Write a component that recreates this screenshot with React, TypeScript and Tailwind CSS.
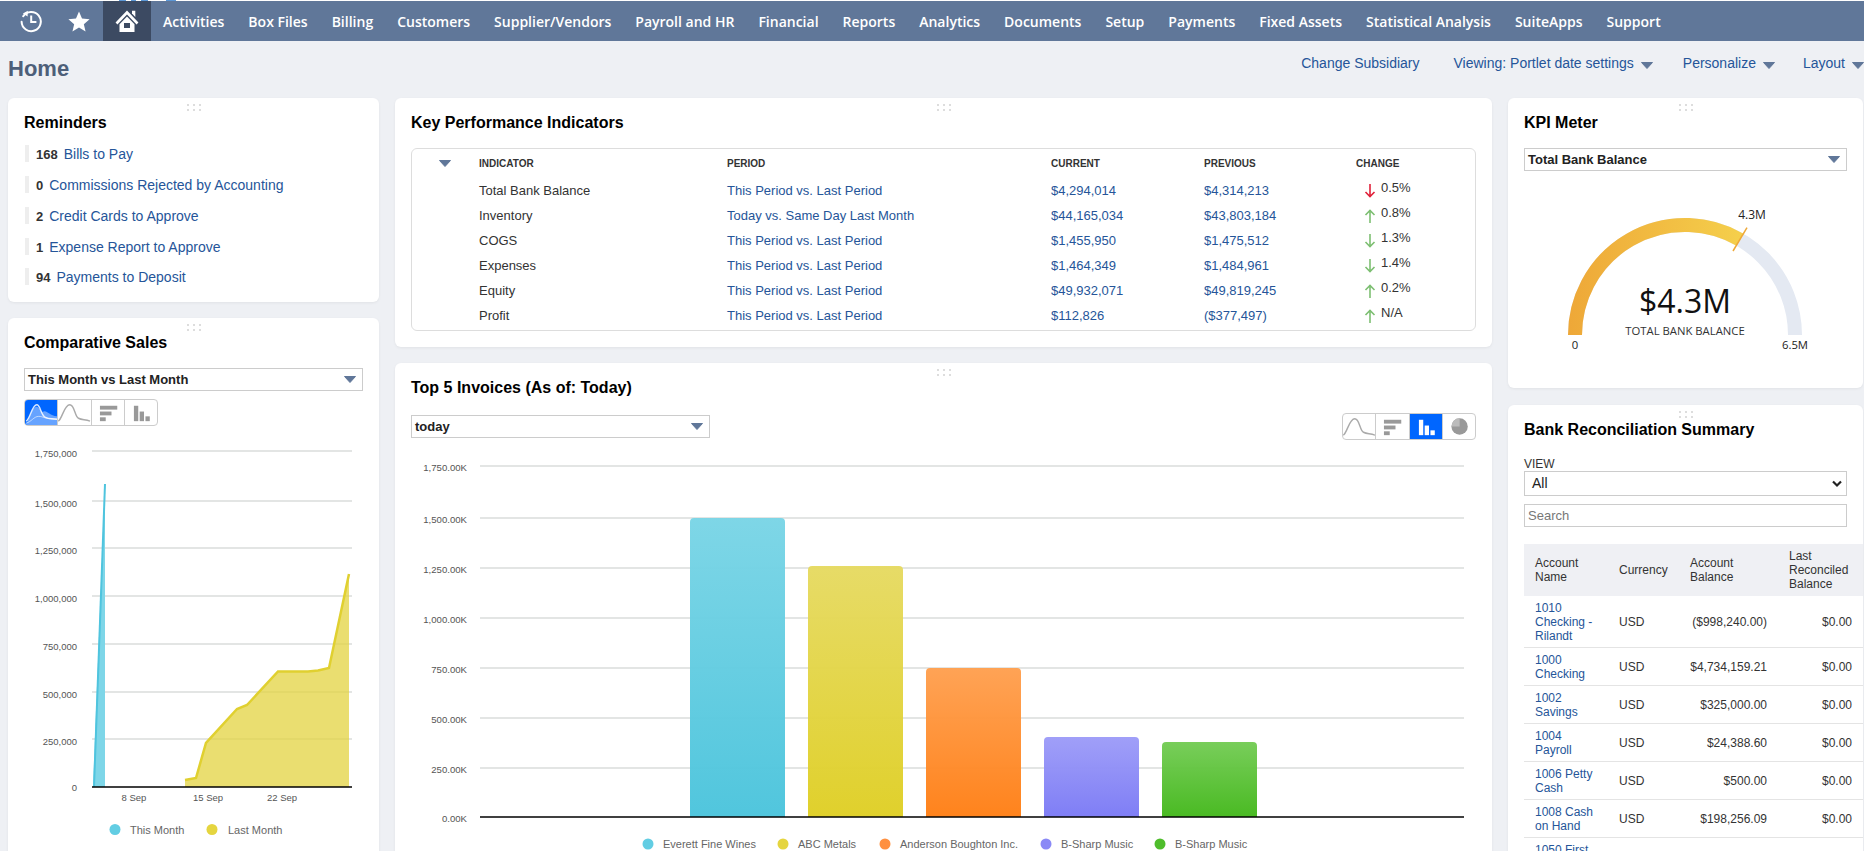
import React from "react";

const NAV = ["Activities","Box Files","Billing","Customers","Supplier/Vendors","Payroll and HR","Financial","Reports","Analytics","Documents","Setup","Payments","Fixed Assets","Statistical Analysis","SuiteApps","Support"];

function Tri({ className = "" }: { className?: string }) {
  return (
    <svg width="12" height="7" viewBox="0 0 12 7" className={className}>
      <path d="M0.5 0.5H11.5L6 6.5Z" fill="#607799" stroke="#607799" strokeLinejoin="round" />
    </svg>
  );
}

function Dots() {
  return (
    <div className="absolute top-[6px] left-1/2 -translate-x-1/2 grid grid-cols-3 gap-x-[4px] gap-y-[3px]">
      {[0,1,2,3,4,5].map((i) => <span key={i} className="block w-[2px] h-[2px] bg-[#dddddd]" />)}
    </div>
  );
}

function Card({ title, className = "", children }: { title: string; className?: string; children: React.ReactNode }) {
  return (
    <section className={`relative bg-white rounded-[6px] shadow-[0_1px_3px_rgba(0,0,0,0.06)] px-4 pt-[15px] overflow-hidden ${className}`}>
      <Dots />
      <h2 className="text-[16px] leading-[20px] font-bold text-black">{title}</h2>
      {children}
    </section>
  );
}

function Select({ label, className = "" }: { label: string; className?: string }) {
  return (
    <div className={`h-[23px] border border-[#cccccc] bg-white flex items-center justify-between pl-[3px] pr-[6px] text-[13px] font-bold text-[#222222] ${className}`}>
      <span>{label}</span>
      <Tri />
    </div>
  );
}

type Kind = "area" | "line" | "hbar" | "vbar" | "pie";

function ChartIcon({ kind, active }: { kind: Kind; active?: boolean }) {
  const c = active ? "#ffffff" : "#999999";
  return (
    <svg viewBox="0 0 33 26" className="block w-full h-full">
      {kind === "area" && (
        <>
          <path d="M1 24 C4 22 6 8 11 7 C15 6 16 14 19 12 C22 10 25 16 33 17 V26 H1Z" fill="#66a3ff" />
          <path d="M1 22 C5 20 7 5 12 5 C16 5 16 16 21 18 C25 20 28 19 33 20" fill="none" stroke="#ffffff" strokeOpacity="0.85" strokeWidth="1.5" />
          <path d="M1 24 C6 23 9 17 14 17 C19 17 20 20 33 20" fill="none" stroke="#ffffff" strokeOpacity="0.6" strokeWidth="1" />
        </>
      )}
      {kind === "line" && (
        <path d="M0 22 C4 20 6 5 12 5 C17 5 17 17 21 19 C25 21 28 20 33 22" fill="none" stroke="#aaaaaa" strokeWidth="1.5" />
      )}
      {kind === "hbar" && (
        <g fill={c}>
          <rect x="8" y="6" width="18" height="4" />
          <rect x="8" y="12" width="12" height="4" />
          <rect x="8" y="18" width="6" height="4" />
        </g>
      )}
      {kind === "vbar" && (
        <g fill={c}>
          <rect x="9" y="6" width="4.5" height="16" />
          <rect x="15" y="12" width="4.5" height="10" />
          <rect x="21" y="17" width="4.5" height="5" />
        </g>
      )}
      {kind === "pie" && (
        <>
          <circle cx="17" cy="13" r="8.5" fill="#999999" />
          <path d="M17 13V4.5A8.5 8.5 0 0 0 8.5 13Z" fill="#bbbbbb" />
        </>
      )}
    </svg>
  );
}

function ChartButtons({ kinds, active }: { kinds: Kind[]; active: Kind }) {
  return (
    <div className="flex w-[134px] h-[27px] border border-[#cccccc] rounded-[4px] overflow-hidden bg-white">
      {kinds.map((k, i) => (
        <div key={k} className={`flex-1 ${i > 0 ? "border-l border-[#cccccc]" : ""} ${k === active ? "bg-[#0066ff]" : ""}`}>
          <ChartIcon kind={k} active={k === active} />
        </div>
      ))}
    </div>
  );
}

function NavIcons() {
  return (
    <>
      <div className="w-[62px] flex items-center justify-center">
        <svg width="24" height="24" viewBox="0 0 24 24" fill="none" stroke="#fff" strokeWidth="2">
          <path d="M4.2 7.2 A9.6 9.6 0 1 1 2.6 12.8" strokeLinecap="round" />
          <path d="M8.8 1.8 L3.9 4.4 L8.6 7.4Z" fill="#fff" stroke="none" />
          <path d="M12.2 6.6 V13 H17.4" strokeWidth="2" />
        </svg>
      </div>
      <div className="w-[41px] -ml-[4px] mr-[4px] flex items-center justify-center">
        <svg width="22" height="21" viewBox="0 0 24 23"><path d="M12 0.5 L15.3 8.2 L23.6 8.9 L17.3 14.4 L19.2 22.5 L12 18.2 L4.8 22.5 L6.7 14.4 L0.4 8.9 L8.7 8.2Z" fill="#fff" /></svg>
      </div>
      <div className="w-[48px] bg-[#3c4a62] flex items-center justify-center">
        <svg width="24" height="23" viewBox="0 0 24 23">
          <path d="M1.5 13.5 L12 2.5 L22.5 13.5" fill="none" stroke="#fff" strokeWidth="2.6" />
          <path d="M17 0.8 H20.3 V7 L17 3.6Z" fill="#fff" />
          <path d="M4.5 14.2 L12 6.4 L19.5 14.2 V22 H4.5Z M9 13 V18 H15 V13Z" fill="#fff" fillRule="evenodd" />
        </svg>
      </div>
    </>
  );
}

function Reminder({ n, text, className = "mb-[14px]" }: { n: string; text: string; className?: string }) {
  return (
    <li className={`flex items-center h-[17px] leading-[17px] ${className}`}>
      <span className="w-[4px] h-[17px] bg-[#eeeeee] ml-[1px] mr-[7px]" />
      <span className="pt-px text-[13px] font-bold text-[#333333] mr-[6px]">{n}</span>
      <a className="pt-px text-[14px] text-[#255599]">{text}</a>
    </li>
  );
}

const KPI = [
  ["Total Bank Balance","This Period vs. Last Period","$4,294,014","$4,314,213","down-red","0.5%"],
  ["Inventory","Today vs. Same Day Last Month","$44,165,034","$43,803,184","up","0.8%"],
  ["COGS","This Period vs. Last Period","$1,455,950","$1,475,512","down","1.3%"],
  ["Expenses","This Period vs. Last Period","$1,464,349","$1,484,961","down","1.4%"],
  ["Equity","This Period vs. Last Period","$49,932,071","$49,819,245","up","0.2%"],
  ["Profit","This Period vs. Last Period","$112,826","($377,497)","up","N/A"],
];

function Arrow({ kind }: { kind: string }) {
  const color = kind === "down-red" ? "#e0213a" : "#7dbf72";
  const d = kind === "up" ? "M6 14 V1.5 M1.5 6 L6 1.5 L10.5 6" : "M6 0 V12.5 M1.5 8 L6 12.5 L10.5 8";
  return (
    <svg width="12" height="14" viewBox="0 0 12 14" className="ml-[8px] mr-[5px] shrink-0">
      <path d={d} fill="none" stroke={color} strokeWidth="1.6" />
    </svg>
  );
}

function KpiTable() {
  const cols = "grid grid-cols-[67px_248px_324px_153px_152px_1fr]";
  return (
    <div className="mt-[15px] h-[183px] border border-[#dddddd] rounded-[6px] text-[13px] text-[#333333]">
      <div className={`${cols} h-[29px] items-center text-[10px] font-bold text-[#333333]`}>
        <span className="flex justify-center pr-px"><Tri /></span>
        <span>INDICATOR</span><span>PERIOD</span><span>CURRENT</span><span>PREVIOUS</span><span>CHANGE</span>
      </div>
      {KPI.map((r) => (
        <div key={r[0]} className={`${cols} h-[25px] items-center`}>
          <span />
          <span>{r[0]}</span>
          <a className="text-[#255599]">{r[1]}</a>
          <a className="text-[#255599]">{r[2]}</a>
          <a className="text-[#255599]">{r[3]}</a>
          <span className="flex items-center">
            <Arrow kind={r[4]} />
            <span className="mb-[6px]">{r[5]}</span>
          </span>
        </div>
      ))}
    </div>
  );
}

const LEFT_Y = [[451,"1,750,000"],[501,"1,500,000"],[548,"1,250,000"],[596,"1,000,000"],[644,"750,000"],[692,"500,000"],[739,"250,000"]] as [number,string][];

function SalesChart() {
  const ff = { fontFamily: '"Liberation Sans", Arial, sans-serif' };
  return (
    <svg viewBox="24 430 339 421" width="339" height="421" className="block mt-[4px]" style={ff}>
      {LEFT_Y.map(([y, t]) => (
        <g key={t}>
          <line x1="92" x2="352" y1={y} y2={y} stroke="#dadddb" strokeWidth="1.5" />
          <text x="77" y={y + 6} textAnchor="end" fontSize="9.5" fill="#555555">{t}</text>
        </g>
      ))}
      <text x="77" y="791" textAnchor="end" fontSize="9.5" fill="#555555">0</text>
      <path d="M93 787 L105 484 V787Z" fill="#7ed6e8" />
      <path d="M94 787 L105 484" fill="none" stroke="#4fc4de" strokeWidth="2" />
      <path d="M185 787 V780 L196 778 L206 743 L237 709 L247 705 L278 671.5 L308 671.5 L318 670.5 L329 668 L349 574 V787Z" fill="#e3d340" fillOpacity="0.75" />
      <path d="M185 780 L196 778 L206 743 L237 709 L247 705 L278 671.5 L308 671.5 L318 670.5 L329 668 L349 574" fill="none" stroke="#e0d030" strokeWidth="2.5" />
      <line x1="92" x2="352" y1="787" y2="787" stroke="#000" strokeWidth="1.5" />
      {[[134,"8 Sep"],[208,"15 Sep"],[282,"22 Sep"]].map(([x, t]) => (
        <text key={t} x={x} y="801" textAnchor="middle" fontSize="9.5" fill="#555555">{t}</text>
      ))}
      <circle cx="115" cy="829.5" r="5.5" fill="#62cde3" />
      <text x="130" y="833.5" fontSize="11" fill="#666666">This Month</text>
      <circle cx="212" cy="829.5" r="5.5" fill="#e5d53f" />
      <text x="228" y="833.5" fontSize="11" fill="#666666">Last Month</text>
    </svg>
  );
}

const BAR_Y = [[465,"1,750.00K"],[517,"1,500.00K"],[567,"1,250.00K"],[617,"1,000.00K"],[667,"750.00K"],[717,"500.00K"],[767,"250.00K"]] as [number,string][];
const BARS = [
  { x: 690, top: 517, a: "#7ad5e6", b: "#4bc4dc", id: "b1" },
  { x: 808, top: 565, a: "#e6da62", b: "#dfcf25", id: "b2" },
  { x: 926, top: 667, a: "#ffa050", b: "#ff7f15", id: "b3" },
  { x: 1044, top: 736, a: "#9d9cf8", b: "#7b7af5", id: "b4" },
  { x: 1162, top: 741, a: "#74cc55", b: "#44b81c", id: "b5" },
];
const LEG = [[648,"Everett Fine Wines","#62cde3"],[783,"ABC Metals","#e5d53f"],[885,"Anderson Boughton Inc.","#ff9040"],[1046,"B-Sharp Music","#8a89f6"],[1160,"B-Sharp Music","#4fbd2c"]] as [number,string,string][];

function BarChart() {
  return (
    <svg viewBox="411 445 1064 406" width="1064" height="406" className="block mt-[6px]" style={{ fontFamily: '"Liberation Sans", Arial, sans-serif' }}>
      <defs>
        {BARS.map((b) => (
          <linearGradient key={b.id} id={b.id} x1="0" y1="0" x2="0" y2="1">
            <stop offset="0" stopColor={b.a} />
            <stop offset="1" stopColor={b.b} />
          </linearGradient>
        ))}
      </defs>
      {BAR_Y.map(([y, t]) => (
        <g key={t}>
          <line x1="480" x2="1464" y1={y} y2={y} stroke="#dadddb" strokeWidth="1.5" />
          <text x="467" y={y + 5} textAnchor="end" fontSize="9.6" fill="#555555">{t}</text>
        </g>
      ))}
      <text x="467" y="821" textAnchor="end" fontSize="9.6" fill="#555555">0.00K</text>
      {BARS.map((b) => (
        <path key={b.id} d={`M${b.x} 816 V${b.top + 4} Q${b.x} ${b.top} ${b.x + 4} ${b.top} H${b.x + 91} Q${b.x + 95} ${b.top} ${b.x + 95} ${b.top + 4} V816Z`} fill={`url(#${b.id})`} fillOpacity="0.97" />
      ))}
      <line x1="480" x2="1464" y1="816" y2="816" stroke="#000" strokeWidth="1.5" />
      {LEG.map(([x, t, c], i) => (
        <g key={i}>
          <circle cx={x} cy="843" r="5.5" fill={c} />
          <text x={x + 15} y="847" fontSize="11" fill="#666666">{t}</text>
        </g>
      ))}
    </svg>
  );
}

function Gauge() {
  const open = { fontFamily: '"Open Sans", sans-serif' };
  return (
    <svg viewBox="1524 175 323 190" width="323" height="190" className="block mt-[4px]" style={open}>
      <defs>
        <linearGradient id="gauge" gradientUnits="userSpaceOnUse" x1="1570" y1="0" x2="1745" y2="0">
          <stop offset="0" stopColor="#eea838" />
          <stop offset="1" stopColor="#f5d04c" />
        </linearGradient>
      </defs>
      <path d="M1575 335 A110 110 0 0 1 1795 335" fill="none" stroke="#e4e9f2" strokeWidth="14" />
      <path d="M1575 335 A110 110 0 0 1 1740 239.74" fill="none" stroke="url(#gauge)" strokeWidth="14" />
      <line x1="1733" y1="251" x2="1747" y2="227.7" stroke="#eea838" strokeWidth="1.5" />
      <text x="1752" y="219" textAnchor="middle" fontSize="12" fill="#222">4.3M</text>
      <text x="1685" y="313" textAnchor="middle" fontSize="32" fill="#111">$4.3M</text>
      <text x="1685" y="335" textAnchor="middle" fontSize="11.3" fill="#333">TOTAL BANK BALANCE</text>
      <text x="1575" y="349" textAnchor="middle" fontSize="11.3" fill="#222">0</text>
      <text x="1795" y="349" textAnchor="middle" fontSize="11.3" fill="#222">6.5M</text>
    </svg>
  );
}

const BANK = [
  ["1010 Checking - Rilandt","($998,240.00)"],
  ["1000 Checking","$4,734,159.21"],
  ["1002 Savings","$325,000.00"],
  ["1004 Payroll","$24,388.60"],
  ["1006 Petty Cash","$500.00"],
  ["1008 Cash on Hand","$198,256.09"],
];

function BankTable() {
  return (
    <table className="mt-[17px] w-[340px] table-fixed border-collapse text-[12px] leading-[14px] text-[#333333]">
      <colgroup>
        <col className="w-[83px]" /><col className="w-[71px]" /><col className="w-[99px]" /><col className="w-[87px]" />
      </colgroup>
      <thead className="bg-[#eff0f4]">
        <tr>
          <th className="font-normal text-left pl-[11px] py-[5px]">Account Name</th>
          <th className="font-normal text-left pl-3 py-[5px]">Currency</th>
          <th className="font-normal text-left pl-3 py-[5px]">Account Balance</th>
          <th className="font-normal text-left pl-3 py-[5px]">Last Reconciled Balance</th>
        </tr>
      </thead>
      <tbody>
        {BANK.map((r) => (
          <tr key={r[0]} className="border-b border-[#e4e4e4]">
            <td className="pl-[11px] pr-2 pt-[5px] pb-[4px] text-[#255599]">{r[0]}</td>
            <td className="pl-3 pt-[5px] pb-[4px]">USD</td>
            <td className="pr-[10px] pt-[5px] pb-[4px] text-right">{r[1]}</td>
            <td className="pr-3 pt-[5px] pb-[4px] text-right">$0.00</td>
          </tr>
        ))}
        <tr>
          <td className="pl-[11px] pr-2 pt-[5px] pb-[4px] text-[#255599]">1050 First</td>
          <td /><td /><td />
        </tr>
      </tbody>
    </table>
  );
}

export default function App() {
  return (
    <div className="h-[851px] w-[1864px] overflow-hidden bg-[#eef0f4]" style={{ fontFamily: '"Liberation Sans", Arial, sans-serif' }}>
      <div className="h-px bg-white flex pl-[119px] gap-[5px]">
        <span className="w-[7px] bg-[#5b97d6]" />
        <span className="w-[5px] bg-[#5b97d6]" />
        <span className="w-[7px] bg-[#5b97d6]" />
        <span className="ml-[13px] w-[10px] bg-[#5b97d6]" />
      </div>
      <nav className="h-[40px] bg-[#607799] flex items-stretch text-white text-[14px] font-semibold" style={{ fontFamily: '"Open Sans", sans-serif' }}>
        <NavIcons />
        <ul className="flex items-center gap-[24px] pl-[12px]">
          {NAV.map((n) => <li key={n}>{n}</li>)}
        </ul>
      </nav>

      <header className="h-[57px] flex justify-between pl-2">
        <h1 className="mt-[16px] text-[22px] leading-[24px] font-bold text-[#4d5f79]">Home</h1>
        <div className="flex items-start pt-[14px] text-[14px] leading-[17px] text-[#255599]">
          <a className="mr-[34px]">Change Subsidiary</a>
          <a className="flex items-center mr-[30px]">Viewing: Portlet date settings<Tri className="ml-[7px] mt-[3px]" /></a>
          <a className="flex items-center mr-[28px]">Personalize<Tri className="ml-[7px] mt-[3px]" /></a>
          <a className="flex items-center">Layout<Tri className="ml-[7px] mt-[3px]" /></a>
        </div>
      </header>

      <main className="grid grid-cols-[371px_1097px_355px] gap-x-4 pl-2">
        <div className="flex flex-col gap-4">
          <Card title="Reminders" className="h-[204px]">
            <ul className="mt-[12px]">
              <Reminder n="168" text="Bills to Pay" />
              <Reminder n="0" text="Commissions Rejected by Accounting" />
              <Reminder n="2" text="Credit Cards to Approve" />
              <Reminder n="1" text="Expense Report to Approve" className="mb-[13px]" />
              <Reminder n="94" text="Payments to Deposit" />
            </ul>
          </Card>
          <Card title="Comparative Sales" className="h-[560px]">
            <Select label="This Month vs Last Month" className="mt-[15px] w-[339px]" />
            <div className="mt-[8px]">
              <ChartButtons kinds={["area","line","hbar","vbar"]} active="area" />
            </div>
            <SalesChart />
          </Card>
        </div>

        <div className="flex flex-col gap-4">
          <Card title="Key Performance Indicators" className="h-[249px]">
            <KpiTable />
          </Card>
          <Card title="Top 5 Invoices (As of: Today)" className="h-[520px]">
            <div className="mt-[15px] flex items-center justify-between">
              <Select label="today" className="w-[299px]" />
              <ChartButtons kinds={["line","hbar","vbar","pie"]} active="vbar" />
            </div>
            <BarChart />
          </Card>
        </div>

        <div className="flex flex-col gap-[17px]">
          <Card title="KPI Meter" className="h-[290px]">
            <Select label="Total Bank Balance" className="mt-[15px] w-[323px]" />
            <Gauge />
          </Card>
          <Card title="Bank Reconciliation Summary" className="h-[520px] !pr-0">
            <div className="mt-[17px] text-[12px] leading-[14px] text-[#333333]">VIEW</div>
            <div className="w-[323px] h-[25px] border border-[#cccccc] flex items-center justify-between pl-[7px] pr-[3px] text-[14px] text-[#222222]">
              <span>All</span>
              <svg width="12" height="8" viewBox="0 0 12 8"><path d="M2 1.5 L6 5.5 L10 1.5" fill="none" stroke="#222" strokeWidth="2.2" /></svg>
            </div>
            <div className="mt-2 w-[323px] h-[23px] border border-[#cccccc] flex items-center pl-[3px] text-[13px] text-[#777777]">Search</div>
            <BankTable />
          </Card>
        </div>
      </main>
    </div>
  );
}
